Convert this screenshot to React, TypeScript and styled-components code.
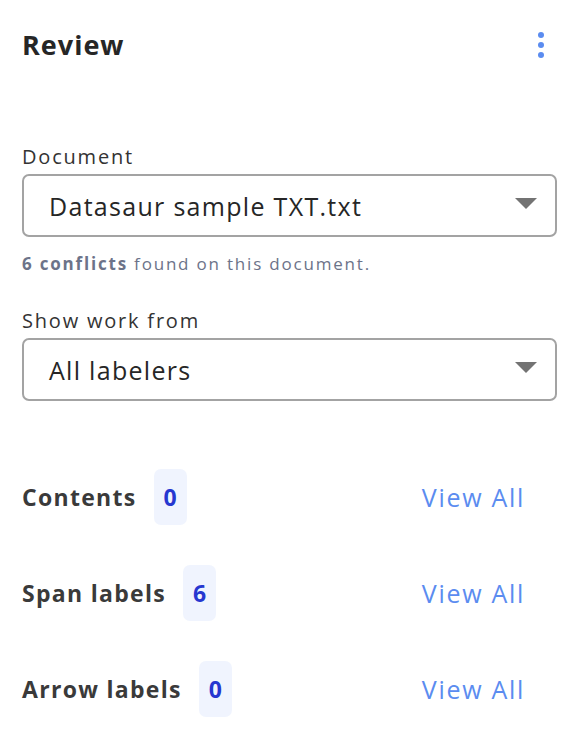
import React from "react";
import styled, { createGlobalStyle } from "styled-components";

const Global = createGlobalStyle`
  html, body { margin: 0; padding: 0; background: #ffffff; }
  body { font-family: "Open Sans", "Noto Sans", sans-serif; }
  * { box-sizing: border-box; }
`;

const Panel = styled.div`
  width: 582px;
  height: 732px;
  padding: 0 25px 0 22px;
  display: flex;
  flex-direction: column;
  color: #2b2b2b;
`;

const Header = styled.div`
  height: 90px;
  display: flex;
  align-items: center;
  justify-content: space-between;
`;

const Title = styled.h1`
  margin: 0 0 2px;
  font-size: 27px;
  font-weight: 700;
  letter-spacing: 1px;
  color: #262626;
`;

const Kebab = styled.button`
  border: 0;
  background: transparent;
  padding: 0;
  width: 20px;
  height: 32px;
  display: flex;
  flex-direction: column;
  align-items: center;
  justify-content: center;
  gap: 4px;
  margin-right: 6px;
`;

const Dot = styled.span`
  width: 6px;
  height: 6px;
  border-radius: 50%;
  background: #5b8cf0;
`;

const Field = styled.div<{ $top: number }>`
  margin-top: ${(p) => p.$top}px;
  display: flex;
  flex-direction: column;
`;

const Label = styled.label`
  font-size: 20px;
  line-height: 26px;
  letter-spacing: 1.8px;
  color: #333333;
  margin-bottom: 4px;
`;

const Select = styled.div`
  height: 63px;
  border: 2px solid #a3a3a3;
  border-radius: 7px;
  display: flex;
  align-items: center;
  justify-content: space-between;
  padding: 0 18px 0 25px;
  font-size: 25px;
  color: #262626;
  letter-spacing: 1.3px;
`;

const Caret = styled.span`
  width: 0;
  height: 0;
  border-left: 11px solid transparent;
  border-right: 11px solid transparent;
  border-top: 11px solid #737373;
  margin-top: -4px;
`;

const Helper = styled.p`
  margin: 17px 0 0;
  font-size: 17px;
  line-height: 20px;
  letter-spacing: 1.8px;
  color: #6c7389;
  b { font-weight: 700; }
`;

const Rows = styled.div`
  margin-top: 68px;
  display: flex;
  flex-direction: column;
  gap: 40px;
`;

const Row = styled.div`
  height: 56px;
  display: flex;
  align-items: center;
  justify-content: space-between;
`;

const RowLeft = styled.div`
  display: flex;
  align-items: center;
  gap: 17px;
`;

const RowLabel = styled.span`
  font-size: 23px;
  font-weight: 700;
  letter-spacing: 1.3px;
  color: #3a3a3a;
`;

const Badge = styled.span`
  min-width: 33px;
  height: 56px;
  border-radius: 7px;
  background: #f0f4fe;
  display: flex;
  align-items: center;
  justify-content: center;
  font-size: 23px;
  font-weight: 700;
  color: #2637d0;
`;

const ViewAll = styled.button`
  border: 0;
  background: transparent;
  padding: 0 32px 0 0;
  font-family: inherit;
  font-size: 25px;
  letter-spacing: 1.7px;
  color: #5b8cf0;
`;

const counts = [
  { name: "Contents", n: 0 },
  { name: "Span labels", n: 6 },
  { name: "Arrow labels", n: 0 },
];

export default function App() {
  return (
    <>
      <Global />
      <Panel>
        <Header>
          <Title>Review</Title>
          <Kebab aria-label="More">
            <Dot />
            <Dot />
            <Dot />
          </Kebab>
        </Header>
        <Field $top={54}>
          <Label>Document</Label>
          <Select>
            <span>Datasaur sample TXT.txt</span>
            <Caret />
          </Select>
          <Helper>
            <b>6 conflicts</b> found on this document.
          </Helper>
        </Field>
        <Field $top={34}>
          <Label>Show work from</Label>
          <Select>
            <span>All labelers</span>
            <Caret />
          </Select>
        </Field>
        <Rows>
          {counts.map((c) => (
            <Row key={c.name}>
              <RowLeft>
                <RowLabel>{c.name}</RowLabel>
                <Badge>{c.n}</Badge>
              </RowLeft>
              <ViewAll>View All</ViewAll>
            </Row>
          ))}
        </Rows>
      </Panel>
    </>
  );
}
